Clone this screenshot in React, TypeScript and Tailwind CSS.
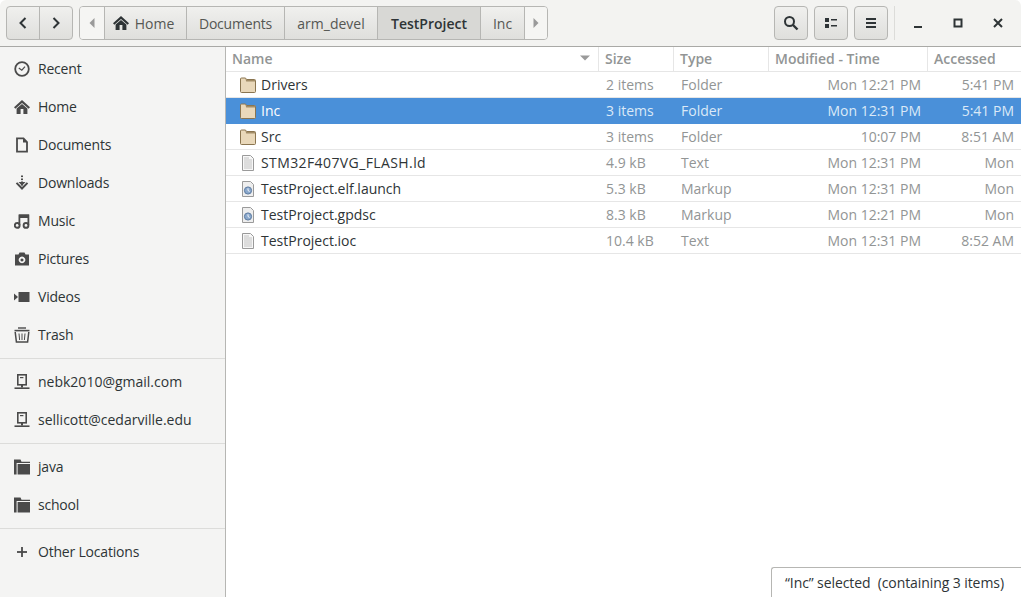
import React from 'react';

const font = 'font-["Open_Sans","Noto_Sans",sans-serif]';

// symbolic sidebar icons, 16x16
const RecentIcon = () => (
  <svg width="16" height="16" viewBox="0 0 16 16" fill="none" stroke="#4a4a4a" strokeWidth="1.8">
    <circle cx="8" cy="8" r="6.8" />
    <path d="M4.8 7 L7.8 9.2 L11 5.6" strokeWidth="1.2" />
  </svg>
);
const HomeIcon = ({ color = '#4a4a4a' }: { color?: string }) => (
  <svg width="16" height="16" viewBox="0 0 16 16" fill={color}>
    <path d="M8 1 L0 8.2 L1.4 9.7 L8 3.9 L14.6 9.7 L16 8.2 Z" />
    <path fillRule="evenodd" d="M2.6 9.4 L8 4.9 L13.4 9.4 V15 H2.6 Z M6.6 10 V15 H9.4 V10 Z" />
  </svg>
);
const DocIcon = () => (
  <svg width="16" height="16" viewBox="0 0 16 16" fill="none" stroke="#4a4a4a" strokeWidth="1.8">
    <path d="M3 1.4 H9.5 L13 5 V14.6 H3 Z" />
    <path d="M9 1 L13.6 5.6 H9 Z" fill="#4a4a4a" stroke="none" />
  </svg>
);
const DownloadIcon = () => (
  <svg width="16" height="16" viewBox="0 0 16 16" fill="#4a4a4a">
    <rect x="7" y="0.5" width="2" height="1.6" />
    <rect x="7" y="3.5" width="2" height="1.6" />
    <rect x="7" y="6.5" width="2" height="4" />
    <path d="M4 6.5 L8 10.5 L12 6.5 L13 7.6 L8 0 Z" fill="none" />
    <path d="M4.5 7 H11.5 L8 10.8 Z" />
    <path d="M1.8 8.4 L3.2 7.2 L8 12 L12.8 7.2 L14.2 8.4 L8 15 Z" />
  </svg>
);
const MusicIcon = () => (
  <svg width="16" height="16" viewBox="0 0 16 16" fill="none" stroke="#4a4a4a">
    <circle cx="3.2" cy="12.4" r="2.4" strokeWidth="1.9" />
    <circle cx="12" cy="12.4" r="2.4" strokeWidth="1.9" />
    <path d="M5.4 12 V2.4 H14.4 V12" strokeWidth="1.8" />
    <path d="M5 1.5 H15 V5 H5 Z" fill="#4a4a4a" stroke="none" />
  </svg>
);
const CameraIcon = () => (
  <svg width="16" height="16" viewBox="0 0 16 16" fill="#4a4a4a">
    <path
      fillRule="evenodd"
      d="M1 3.5 H4.5 L5.5 1.5 H10.5 L11.5 3.5 H15 V14.5 H1 Z M8 5.6 A3.3 3.3 0 1 0 8.01 5.6 Z M8 7.4 A1.5 1.5 0 1 1 7.99 7.4 Z"
    />
  </svg>
);
const VideoIcon = () => (
  <svg width="16" height="16" viewBox="0 0 16 16" fill="#4a4a4a">
    <rect x="4.5" y="3" width="11" height="10" />
    <path d="M0 4.5 L4 8 L0 11.5 Z" />
  </svg>
);
const TrashIcon = () => (
  <svg width="16" height="16" viewBox="0 0 16 16" fill="none" stroke="#4a4a4a" strokeWidth="1.1">
    <path d="M4 1 H12" strokeWidth="1.4" />
    <path d="M0.5 2.8 H15.5 V4.4 H0.5 Z" fill="#4a4a4a" stroke="none" />
    <path d="M1.2 5 L2.4 15 H13.6 L14.8 5" strokeWidth="1.5" />
    <path d="M5 6.5 L5.6 13 M8 6.5 V13 M11 6.5 L10.4 13" strokeWidth="1" />
  </svg>
);
const NetworkIcon = () => (
  <svg width="16" height="16" viewBox="0 0 16 16" fill="none" stroke="#4a4a4a">
    <rect x="3.8" y="0.8" width="8.4" height="10" strokeWidth="1.6" />
    <rect x="6" y="3" width="3.4" height="1.2" fill="#4a4a4a" stroke="none" />
    <rect x="7" y="11" width="2" height="2.5" fill="#4a4a4a" stroke="none" />
    <rect x="0.5" y="13.4" width="15" height="1.6" fill="#4a4a4a" stroke="none" />
  </svg>
);
const SideFolderIcon = () => (
  <svg width="16" height="16" viewBox="0 0 16 16" fill="#4a4a4a">
    <path d="M0 0.5 H6.5 L7.5 2.8 H16 V4 H2.6 V15.5 H0 Z" />
    <path d="M3.6 5 H16 V15.5 H3.6 Z" />
  </svg>
);
const PlusIcon = () => (
  <svg width="16" height="16" viewBox="0 0 16 16" fill="#4a4a4a">
    <rect x="7.1" y="3" width="1.8" height="10" />
    <rect x="3" y="7.1" width="10" height="1.8" />
  </svg>
);

// file list icons
const FolderFile = () => (
  <svg width="16" height="16" viewBox="0 0 16 16">
    <path
      d="M0.5 2 Q0.5 1 1.5 1 H5.5 L6.5 2.5 H14.5 Q15.5 2.5 15.5 3.5 V14.5 Q15.5 15.5 14.5 15.5 H1.5 Q0.5 15.5 0.5 14.5 Z"
      fill="#e9d8ba"
      stroke="#8a7550"
    />
    <path d="M1 1.5 H5.3 L6.2 4.5 H15 V3 H6.5 L5.5 1.5 Z" fill="#a28c66" />
  </svg>
);
const TextFile = () => (
  <svg width="16" height="16" viewBox="0 0 16 16">
    <path d="M2.5 0.5 H10.5 L13.5 3.5 V15.5 H2.5 Z" fill="#f7f7f7" stroke="#9a9a9a" />
    <path d="M4 3 H9 M4 5 H12 M4 7 H12 M4 9 H12 M4 11 H12 M4 13 H12" stroke="#c2c2c2" />
  </svg>
);
const MarkupFile = () => (
  <svg width="16" height="16" viewBox="0 0 16 16">
    <path d="M2.5 0.5 H10.5 L13.5 3.5 V15.5 H2.5 Z" fill="#eeeeee" stroke="#9a9a9a" />
    <circle cx="8" cy="9.5" r="3.6" fill="#8aa8cc" stroke="#5d7ba1" />
    <path d="M8 7.3 V9.5 L9.6 10.5" stroke="#ffffff" strokeWidth="0.9" fill="none" />
  </svg>
);

type SideItem = { label: string; icon: React.ReactNode };

const groupA: SideItem[] = [
  { label: 'Recent', icon: <RecentIcon /> },
  { label: 'Home', icon: <HomeIcon /> },
  { label: 'Documents', icon: <DocIcon /> },
  { label: 'Downloads', icon: <DownloadIcon /> },
  { label: 'Music', icon: <MusicIcon /> },
  { label: 'Pictures', icon: <CameraIcon /> },
  { label: 'Videos', icon: <VideoIcon /> },
  { label: 'Trash', icon: <TrashIcon /> },
];
const groupB: SideItem[] = [
  { label: 'nebk2010@gmail.com', icon: <NetworkIcon /> },
  { label: 'sellicott@cedarville.edu', icon: <NetworkIcon /> },
];
const groupC: SideItem[] = [
  { label: 'java', icon: <SideFolderIcon /> },
  { label: 'school', icon: <SideFolderIcon /> },
];

const files = [
  { name: 'Drivers', size: '2 items', type: 'Folder', mod: 'Mon 12:21 PM', acc: '5:41 PM', icon: <FolderFile /> },
  { name: 'Inc', size: '3 items', type: 'Folder', mod: 'Mon 12:31 PM', acc: '5:41 PM', icon: <FolderFile />, selected: true },
  { name: 'Src', size: '3 items', type: 'Folder', mod: '10:07 PM', acc: '8:51 AM', icon: <FolderFile /> },
  { name: 'STM32F407VG_FLASH.ld', size: '4.9 kB', type: 'Text', mod: 'Mon 12:31 PM', acc: 'Mon', icon: <TextFile />, wide: true },
  { name: 'TestProject.elf.launch', size: '5.3 kB', type: 'Markup', mod: 'Mon 12:31 PM', acc: 'Mon', icon: <MarkupFile /> },
  { name: 'TestProject.gpdsc', size: '8.3 kB', type: 'Markup', mod: 'Mon 12:21 PM', acc: 'Mon', icon: <MarkupFile /> },
  { name: 'TestProject.ioc', size: '10.4 kB', type: 'Text', mod: 'Mon 12:31 PM', acc: '8:52 AM', icon: <TextFile /> },
];

const btn = 'flex items-center justify-center bg-gradient-to-b from-[#f0f0ee] to-[#dfdfdc] border border-[#b6b6b3]';

function SideRow({ item, tight = true }: { item: SideItem; tight?: boolean }) {
  return (
    <div className="flex items-center h-[38px] pl-[14px]">
      <span className="w-[16px] h-[16px] shrink-0 mr-[8px]">{item.icon}</span>
      <span className={`text-[14px] text-[#2e3436] leading-none whitespace-nowrap ${tight ? 'tracking-[-0.2px]' : ''}`}>
        {item.label}
      </span>
    </div>
  );
}

function Crumb({ w, active, children }: { w: string; active?: boolean; children: React.ReactNode }) {
  return (
    <div
      className={`${w} h-full flex items-center justify-center border-r border-[#b6b6b3] text-[14px] ${
        active
          ? 'bg-[#d8d8d5] font-semibold text-[#2e3436]'
          : 'bg-gradient-to-b from-[#f0f0ee] to-[#dfdfdc] text-[#555753]'
      }`}
    >
      {children}
    </div>
  );
}

function HeaderCell({ w, children, last }: { w: string; children: React.ReactNode; last?: boolean }) {
  return (
    <div
      className={`${w} h-full flex items-center pl-[6px] pb-[2px] font-semibold text-[14px] text-[#929595] ${
        last ? '' : 'border-r border-[#e6e6e6]'
      }`}
    >
      {children}
    </div>
  );
}

export default function App() {
  return (
    <div className={`${font} relative w-[1021px] h-[597px] overflow-hidden bg-white flex flex-col`}>
      {/* Header bar */}
      <header className="h-[47px] shrink-0 flex items-center pl-[6px] pr-0 bg-[#f3f3f1] border-b border-[#a9a9a6] rounded-t-[6px]">
        <div className="flex h-[34px] w-[67px] rounded-[4px] overflow-hidden border border-[#b6b6b3] bg-gradient-to-b from-[#f0f0ee] to-[#dfdfdc]">
          <div className="w-[33px] flex items-center justify-center border-r border-[#b6b6b3]">
            <svg width="16" height="16" viewBox="0 0 16 16" fill="none" stroke="#2e3436" strokeWidth="2">
              <path d="M10.5 3 L5.5 8 L10.5 13" />
            </svg>
          </div>
          <div className="flex-1 flex items-center justify-center">
            <svg width="16" height="16" viewBox="0 0 16 16" fill="none" stroke="#2e3436" strokeWidth="2">
              <path d="M5.5 3 L10.5 8 L5.5 13" />
            </svg>
          </div>
        </div>

        <div className="ml-[6px] flex h-[34px] w-[469px] rounded-[4px] overflow-hidden border border-[#b6b6b3]">
          <div className="w-[25px] flex items-center justify-center border-r border-[#b6b6b3] bg-[#f5f5f3]">
            <svg width="8" height="12" viewBox="0 0 8 12" fill="#9a9a9a">
              <path d="M6.5 1 V11 L1.5 6 Z" />
            </svg>
          </div>
          <Crumb w="w-[82px]">
            <span className="mr-[6px] -ml-[4px] tracking-[-0.2px] flex items-center">
              <HomeIcon color="#2e3436" />
            </span>
            Home
          </Crumb>
          <Crumb w="w-[98px]">
            <span className="tracking-[-0.2px]">Documents</span>
          </Crumb>
          <Crumb w="w-[93px]">arm_devel</Crumb>
          <Crumb w="w-[103px]" active>
            TestProject
          </Crumb>
          <Crumb w="w-[44px]">Inc</Crumb>
          <div className="flex-1 flex items-center justify-center bg-[#f5f5f3]">
            <svg width="8" height="12" viewBox="0 0 8 12" fill="#9a9a9a">
              <path d="M1.5 1 V11 L6.5 6 Z" />
            </svg>
          </div>
        </div>

        <div className="flex-1" />

        <div className={`${btn} w-[34px] h-[34px] rounded-[4px]`}>
          <svg width="16" height="16" viewBox="0 0 16 16" fill="none" stroke="#2e3436">
            <circle cx="6.5" cy="6.5" r="4.5" strokeWidth="2" />
            <path d="M10 10 L14.5 14.5" strokeWidth="2.4" />
          </svg>
        </div>
        <div className={`${btn} w-[34px] h-[34px] rounded-[4px] ml-[6px]`}>
          <svg width="16" height="16" viewBox="0 0 16 16" fill="#2e3436">
            <rect x="2" y="3" width="4" height="4" />
            <rect x="2" y="9" width="4" height="4" />
            <rect x="8" y="4" width="6" height="1.5" />
            <rect x="8" y="10" width="6" height="1.5" />
          </svg>
        </div>
        <div className={`${btn} w-[34px] h-[34px] rounded-[4px] ml-[6px]`}>
          <svg width="16" height="16" viewBox="0 0 16 16" fill="#2e3436">
            <rect x="3" y="3" width="10" height="2" />
            <rect x="3" y="7" width="10" height="2" />
            <rect x="3" y="11" width="10" height="2" />
          </svg>
        </div>
        <div className="w-px h-[34px] bg-[#dcdcd9] ml-[6px]" />
        <div className="w-[40px] h-[34px] ml-[3px] flex items-center justify-center">
          <svg width="16" height="16" viewBox="0 0 16 16" fill="#2e3436">
            <rect x="4" y="11" width="8" height="2" />
          </svg>
        </div>
        <div className="w-[40px] h-[34px] flex items-center justify-center">
          <svg width="16" height="16" viewBox="0 0 16 16" fill="none" stroke="#2e3436" strokeWidth="2">
            <rect x="4.5" y="4.5" width="7" height="7" />
          </svg>
        </div>
        <div className="w-[40px] h-[34px] mr-[3px] flex items-center justify-center">
          <svg width="16" height="16" viewBox="0 0 16 16" fill="none" stroke="#2e3436" strokeWidth="2">
            <path d="M4 4 L12 12 M12 4 L4 12" />
          </svg>
        </div>
      </header>

      <div className="flex-1 flex min-h-0">
        {/* Sidebar */}
        <aside className="w-[226px] shrink-0 bg-[#f4f4f3] border-r border-[#b6b6b3] pt-[3px]">
          {groupA.map((i) => (
            <SideRow key={i.label} item={i} />
          ))}
          <div className="h-px bg-[#dcdcda] mt-[4px] mb-[4px]" />
          {groupB.map((i) => (
            <SideRow key={i.label} item={i} tight={false} />
          ))}
          <div className="h-px bg-[#dcdcda] mt-[4px] mb-[4px]" />
          {groupC.map((i) => (
            <SideRow key={i.label} item={i} />
          ))}
          <div className="h-px bg-[#dcdcda] mt-[4px] mb-[4px]" />
          <SideRow item={{ label: 'Other Locations', icon: <PlusIcon /> }} />
        </aside>

        {/* File list */}
        <main className="flex-1 min-w-0 bg-white">
          <div className="h-[25px] flex border-b border-[#e6e6e6]">
            <HeaderCell w="w-[373px]">
              <span className="flex-1">Name</span>
              <svg width="10" height="6" viewBox="0 0 10 6" fill="#9a9a9a" className="mr-[8px]">
                <path d="M0 0.5 H10 L5 5.5 Z" />
              </svg>
            </HeaderCell>
            <HeaderCell w="w-[75px]">Size</HeaderCell>
            <HeaderCell w="w-[95px]">Type</HeaderCell>
            <HeaderCell w="w-[159px]">Modified - Time</HeaderCell>
            <HeaderCell w="flex-1" last>
              Accessed
            </HeaderCell>
          </div>
          {files.map((f) => (
            <div
              key={f.name}
              className={`h-[26px] flex items-center text-[14px] border-b ${
                f.selected ? 'bg-[#4a90d9] border-[#4a90d9]' : 'border-[#e6e6e6]'
              }`}
            >
              <div className={`w-[373px] flex items-center pl-[14px] ${f.selected ? 'text-white' : 'text-[#2e3436]'}`}>
                <span className="w-[16px] h-[16px] mr-[5px]">{f.icon}</span>
                <span className={f.wide ? 'tracking-[0.4px]' : ''}>{f.name}</span>
              </div>
              <div className={`w-[75px] pl-[7px] ${f.selected ? 'text-[#dbe9f7]' : 'text-[#929595]'}`}>{f.size}</div>
              <div className={`w-[95px] pl-[7px] ${f.selected ? 'text-[#dbe9f7]' : 'text-[#929595]'}`}>{f.type}</div>
              <div className={`w-[152px] text-right ${f.selected ? 'text-[#dbe9f7]' : 'text-[#929595]'}`}>{f.mod}</div>
              <div className={`flex-1 text-right pr-[7px] ${f.selected ? 'text-[#dbe9f7]' : 'text-[#929595]'}`}>{f.acc}</div>
            </div>
          ))}
        </main>
      </div>

      {/* Floating status label */}
      <div className="absolute right-0 bottom-0 w-[250px] h-[30px] bg-white border-t border-l border-[#b6b6b3] rounded-tl-[3px] flex items-center pl-[13px] text-[14px] text-[#2e3436] whitespace-pre tracking-[-0.08px]">
        “Inc” selected  (containing 3 items)
      </div>
    </div>
  );
}
